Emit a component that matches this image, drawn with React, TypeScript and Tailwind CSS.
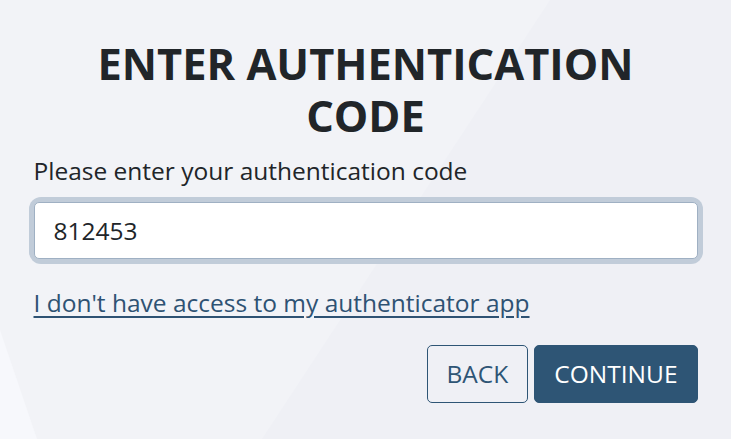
export default function App() {
	return (
		<div
			className="relative min-h-screen w-full overflow-hidden bg-[#f2f3f7] text-[#212529]"
			style={{ fontFamily: '"Open Sans", "Noto Sans", sans-serif' }}
		>
			<svg
				className="absolute inset-0 h-full w-full"
				viewBox="0 0 731 439"
				preserveAspectRatio="none"
				aria-hidden="true"
			>
				<polygon points="550,0 731,0 731,439 262,439" fill="#eff0f5" />
				<polygon points="0,330 0,439 37,439" fill="#f7f8fc" />
			</svg>

			<div className="relative mx-auto w-[664px] pt-[38px]">
				<h1 className="text-center text-[43.4px] font-bold leading-[52px]">
					ENTER AUTHENTICATION CODE
				</h1>

				<label htmlFor="code" className="mt-[11px] block text-[24.5px] leading-[36px]">
					Please enter your authentication code
				</label>

				<div className="mt-[13px] rounded-[7px] shadow-[0_0_0_5px_#c1ccd9]">
					<input
						id="code"
						type="text"
						defaultValue="812453"
						className="block h-[57px] w-full rounded-[5px] border border-[#9fb0c3] bg-white px-[19px] text-[24.5px] leading-[36px] text-[#212529] outline-none"
					/>
				</div>

				<a
					href="#"
					className="mt-[26px] inline-block text-[24.5px] leading-[36px] text-[#2e5273] underline underline-offset-[4px]"
				>
					I don't have access to my authenticator app
				</a>

				<div className="mt-[24px] flex justify-end gap-[6px]">
					<button className="h-[58px] rounded-[5px] border border-[#2e5575] px-[19px] text-[24.5px] text-[#2e5575]">
						BACK
					</button>
					<button className="h-[58px] rounded-[5px] border border-[#2e5575] bg-[#2e5575] px-[19px] text-[24.5px] text-white">
						CONTINUE
					</button>
				</div>
			</div>
		</div>
	);
}
